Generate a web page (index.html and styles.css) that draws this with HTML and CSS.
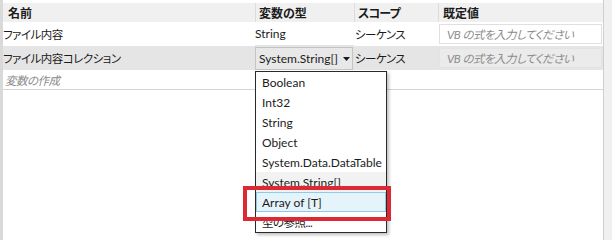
FILE: index.html
```html
<!DOCTYPE html>
<html lang="ja">
<head>
<meta charset="utf-8">
<link rel="stylesheet" href="styles.css">
</head>
<body>
<div class="panel">
  <div class="main">
    <div class="row head">
      <div class="cell c1">名前</div>
      <div class="cell c2">変数の型</div>
      <div class="cell c3 kana-head">スコープ</div>
      <div class="cell c4">既定値</div>
    </div>
    <div class="row r1">
      <div class="cell c1 ja">ファイル内容</div>
      <div class="cell c2 type">String</div>
      <div class="cell c3 ja">シーケンス</div>
      <div class="cell c4"><div class="box ja">VB の式を入力してください</div></div>
    </div>
    <div class="row r2">
      <div class="cell c1 ja">ファイル内容コレクション</div>
      <div class="cell c2">
        <div class="combo"><span class="combo-text">System.String[]</span><svg class="arrow" width="7" height="4" viewBox="0 0 7 4"><path d="M0 0H7L3.5 4Z" fill="#1a1a1a"/></svg></div>
      </div>
      <div class="cell c3 ja">シーケンス</div>
      <div class="cell c4"><div class="box box-grey ja">VB の式を入力してください</div></div>
    </div>
    <div class="row r3">
      <div class="cell c1 create ja">変数の作成</div>
    </div>
  </div>
  <div class="strip"></div>

  <ul class="dropdown">
    <li class="item">Boolean</li>
    <li class="item">Int32</li>
    <li class="item">String</li>
    <li class="item">Object</li>
    <li class="item">System.Data.DataTable</li>
    <li class="item current">System.String[]</li>
    <li class="item hover">Array of [T]</li>
    <li class="item ja">型の参照...</li>
  </ul>
  <div class="callout"></div>
</div>
</body>
</html>
```
FILE: styles.css
```css
html, body {
  margin: 0;
  padding: 0;
  background: #ffffff;
}
body {
  width: 612px;
  height: 240px;
  overflow: hidden;
  font-family: "Lato", "Noto Sans CJK JP", sans-serif;
  font-size: 12px;
  color: #1b1b1b;
  font-feature-settings: "palt";
}
.ja {
  font-size: 11.5px;
  letter-spacing: -0.5px;
}
.panel {
  position: relative;
  display: flex;
  width: 612px;
  height: 240px;
}
.main {
  flex: 1;
  border-left: 3px solid #d9d9d9;
  padding-top: 3px;
  border-right: 1px solid #cfcfcf;
}
.strip {
  width: 8px;
  background: #f0f0f0;
}
.row {
  display: grid;
  grid-template-columns: 252px 99px 84px 1fr;
  align-items: center;
}
.cell {
  white-space: nowrap;
  overflow: hidden;
  height: 100%;
  display: flex;
  align-items: center;
}
.head {
  height: 19px;
  background: #f0f0f0;
  font-weight: bold;
  font-size: 12px;
}
.head .cell { border-left: 1px solid #dcdcdc; }
.head .c1 { border-left: none; padding-left: 5px; }
.head .c2 { padding-left: 3px; }
.head .c3 { padding-left: 3px; }
.head .c4 { padding-left: 4px; }
.kana-head { letter-spacing: -0.8px; }

.r1 { height: 24px; background: #ffffff; }
.r1 .type { border-bottom: 1px solid #e2e2e2; box-sizing: border-box; }
.r1 .c3 { padding-left: 1px; }
.r2 { height: 24px; background: #e5e5e5; }
.r2 .c3 { padding-left: 1px; }
.r3 {
  height: 19px;
  border-bottom: 1px solid #d4d4d4;
  color: #8a8a8a;
  font-style: italic;
}
.create { padding-left: 2px; }

.c4 { padding: 0 1px; }
.box {
  box-sizing: border-box;
  width: 100%;
  height: 20px;
  border: 1px solid #e0e0e0;
  background: #ffffff;
  color: #8c8c8c;
  font-style: italic;
  padding-left: 7px;
  display: flex;
  align-items: center;
}
.box-grey {
  background: #ebebeb;
  border-color: #e3e3e3;
}
.combo {
  box-sizing: border-box;
  width: 98px;
  height: 23px;
  margin-top: 1px;
  border: 1px solid #c4c4c4;
  background: #e8e8e8;
  display: flex;
  align-items: center;
  padding-left: 3px;
}
.combo-text {
  width: 83px;
  overflow: hidden;
}
.arrow { margin-left: 1px; }

.dropdown {
  position: absolute;
  left: 255px;
  top: 71px;
  width: 130px;
  margin: 0;
  padding: 0;
  list-style: none;
  background: #ffffff;
  border: 1px solid #2a2a2a;
  box-shadow: 2px 2px 3px rgba(0, 0, 0, 0.25);
}
.item {
  box-sizing: border-box;
  height: 20px;
  padding-left: 6px;
  display: flex;
  align-items: center;
  white-space: nowrap;
}
.current { background: #f2f2f2; }
.hover {
  background: #e5f3fb;
  border: 1px solid #8fcbe9;
  padding-left: 5px;
}
.callout {
  position: absolute;
  left: 243px;
  top: 186px;
  width: 148px;
  height: 35px;
  box-sizing: border-box;
  border: 4px solid #dc2a35;
}
```
